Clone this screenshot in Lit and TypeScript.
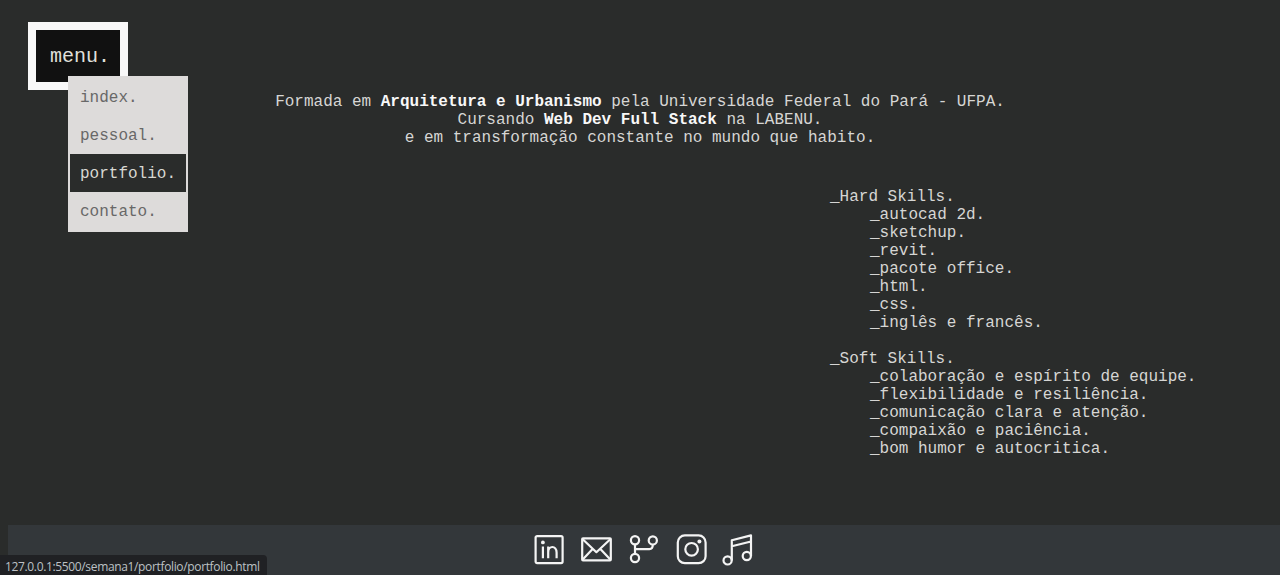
import { LitElement, html, svg, css } from "lit";
import { customElement } from "lit/decorators.js";

const menuItems = ["index.", "pessoal.", "portfolio.", "contato."];
const activeItem = "portfolio.";

const skillGroups = [
  {
    title: "_Hard Skills.",
    items: ["_autocad 2d.", "_sketchup.", "_revit.", "_pacote office.", "_html.", "_css.", "_inglês e francês."],
  },
  {
    title: "_Soft Skills.",
    items: [
      "_colaboração e espírito de equipe.",
      "_flexibilidade e resiliência.",
      "_comunicação clara e atenção.",
      "_compaixão e paciência.",
      "_bom humor e autocritica.",
    ],
  },
];

// Each icon is drawn on a 32x32 canvas.
const socialIcons = [
  svg`<rect x="1.6" y="2.1" width="27" height="27" rx="1.5"/><path d="M8.9 12.6v11.6M14.2 24.2V12.4M14.2 18.4c0-7.2 8.4-7.2 8.4 0v5.8"/><circle class="dot" cx="8.9" cy="8.4" r="1.9"/>`,
  svg`<rect x="1.2" y="4.3" width="28.6" height="22" rx=".8"/><path d="M1.7 5.2 15.4 18.2 29.3 5.2M1.7 25.6 11.6 14.9M29.3 25.6 19.4 14.9"/>`,
  svg`<circle cx="7" cy="6.2" r="4.1"/><circle cx="7" cy="24" r="4.1"/><circle cx="24.8" cy="6.4" r="4.1"/><path d="M7 10.3v9.6M7 15.2h14.4q3.4 0 3.4-4.6"/>`,
  svg`<rect x="2.8" y="1.4" width="27.8" height="27.8" rx="7"/><circle cx="16.6" cy="15.3" r="6.3"/><circle class="dot" cx="24.4" cy="7.6" r="2"/>`,
  svg`<circle cx="5.6" cy="26.4" r="4.1"/><circle cx="24.8" cy="22" r="4.1"/><path d="M9.8 26.4V6.2L29 1.4V22M9.8 12.3 29 7.5"/>`,
];

@customElement("app-root")
export class AppRoot extends LitElement {
  static styles = css`
    :host {
      display: flex;
      flex-direction: column;
      position: relative;
      box-sizing: border-box;
      width: 100%;
      height: 575px;
      padding: 22px 0 0 8px;
      overflow: hidden;
      background: #2a2c2b;
      color: #d6d6d4;
      font: 16px/18px "Courier New", "Liberation Mono", monospace;
    }
    .menu {
      position: relative;
      z-index: 1;
      width: 100px;
      height: 68px;
      margin-left: 20px;
    }
    .menu-button {
      box-sizing: border-box;
      width: 100px;
      height: 68px;
      padding: 2px 0 0 14px;
      border: 8px solid #f8f8f8;
      border-radius: 0;
      background: #111;
      color: #e0e0dc;
      font: 20px/50px "Courier New", "Liberation Mono", monospace;
      text-align: left;
      white-space: nowrap;
      display: block;
    }
    .dropdown {
      position: absolute;
      left: 40px;
      top: 54px;
      box-sizing: border-box;
      width: 120px;
      margin: 0;
      padding: 0;
      border: 2px solid #dddbda;
      background: #dddbda;
      list-style: none;
    }
    .item {
      padding: 11px 10px 9px;
      color: #686868;
    }
    .active {
      background: #2a2c2b;
      color: #d8d8d2;
    }
    .intro {
      margin: 3px 8px 0 0;
      text-align: center;
    }
    .intro strong {
      color: #f8f8f8;
    }
    .skills {
      display: flex;
      flex-direction: column;
      gap: 18px;
      margin: 41px 0 0 822px;
    }
    .title {
      margin: 0;
      font: inherit;
    }
    .list {
      margin: 0;
      padding: 0 0 0 40px;
      list-style: none;
    }
    .footer {
      display: flex;
      justify-content: center;
      align-items: center;
      gap: 15px;
      box-sizing: border-box;
      height: 50px;
      margin-top: auto;
      background: #33373a;
    }
    .icon {
      display: block;
      width: 32px;
      height: 32px;
      overflow: visible;
      fill: none;
      stroke: #f4f4f4;
      stroke-width: 2.2;
      stroke-linejoin: round;
    }
    .icon .dot {
      fill: #f4f4f4;
      stroke: none;
    }
    .status {
      position: absolute;
      left: 0;
      bottom: 0;
      box-sizing: border-box;
      width: 267px;
      height: 20px;
      padding-left: 5px;
      border-radius: 0 4px 0 0;
      background: #202124;
      color: #bdc1c6;
      font: 12px/23px "Open Sans", "Noto Sans", sans-serif;
      letter-spacing: -0.35px;
      white-space: nowrap;
    }
  `;

  render() {
    return html`
      <nav class="menu">
        <button class="menu-button">menu.</button>
        <ul class="dropdown">
          ${menuItems.map((item) => html`<li class="item ${item === activeItem ? "active" : ""}">${item}</li>`)}
        </ul>
      </nav>
      <p class="intro">
        Formada em <strong>Arquitetura e Urbanismo</strong> pela Universidade Federal do Pará - UFPA.<br />
        Cursando <strong>Web Dev Full Stack</strong> na LABENU.<br />
        e em transformação constante no mundo que habito.
      </p>
      <section class="skills">
        ${skillGroups.map(
          (group) => html`<div>
            <h2 class="title">${group.title}</h2>
            <ul class="list">
              ${group.items.map((item) => html`<li>${item}</li>`)}
            </ul>
          </div>`
        )}
      </section>
      <footer class="footer">
        ${socialIcons.map((shape) => html`<svg class="icon" viewBox="0 0 32 32">${shape}</svg>`)}
      </footer>
      <div class="status">127.0.0.1:5500/semana1/portfolio/portfolio.html</div>
    `;
  }
}
